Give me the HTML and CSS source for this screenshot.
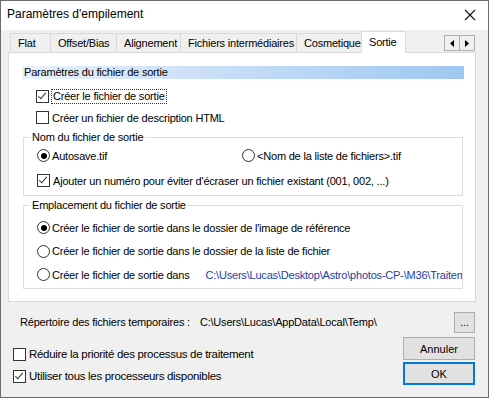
FILE: index.html
```html
<!DOCTYPE html>
<html lang="fr">
<head>
    <meta charset="UTF-8">
    <title>Paramètres d'empilement</title>
    <link rel="stylesheet" href="styles.css">
</head>
<body>
    <div class="window">
        <div class="titlebar">
            <span class="title">Paramètres d'empilement</span>
            <svg class="close" width="12" height="12" viewBox="0 0 12 12">
                <path d="M1 1 L11 11 M11 1 L1 11" stroke="#111" stroke-width="1.1" fill="none"/>
            </svg>
        </div>

        <div class="content">
            <div class="tabs">
                <div class="tab tab-flat">Flat</div>
                <div class="tab tab-offset">Offset/Bias</div>
                <div class="tab tab-align">Alignement</div>
                <div class="tab tab-files">Fichiers intermédiaires</div>
                <div class="tab tab-cosm">Cosmetique</div>
                <div class="tab active">Sortie</div>
                <div class="tab-scroll">
                    <span class="arrow"><svg width="4" height="7" viewBox="0 0 4 7"><path d="M4 0 L0 3.5 L4 7 Z" fill="#000"/></svg></span>
                    <span class="arrow"><svg width="4" height="7" viewBox="0 0 4 7"><path d="M0 0 L4 3.5 L0 7 Z" fill="#000"/></svg></span>
                </div>
            </div>

            <div class="panel">
                <div class="section-head">Paramètres du fichier de sortie</div>

                <div class="options">
                    <label class="row"><span class="check checked"></span><span class="focus">Créer le fichier de sortie</span></label>
                    <label class="row"><span class="check"></span>Créer un fichier de description HTML</label>
                </div>

                <fieldset class="group group-name">
                    <legend>Nom du fichier de sortie</legend>
                    <div class="row radios">
                        <label class="radio-item"><span class="radio selected"></span>Autosave.tif</label>
                        <label class="radio-item"><span class="radio"></span>&lt;Nom de la liste de fichiers&gt;.tif</label>
                    </div>
                    <label class="row numbering"><span class="check checked"></span>Ajouter un numéro pour éviter d'écraser un fichier existant (001, 002, ...)</label>
                </fieldset>

                <fieldset class="group group-place">
                    <legend>Emplacement du fichier de sortie</legend>
                    <label class="row"><span class="radio selected"></span>Créer le fichier de sortie dans le dossier de l'image de référence</label>
                    <label class="row"><span class="radio"></span>Créer le fichier de sortie dans le dossier de la liste de fichier</label>
                    <label class="row"><span class="radio"></span>Créer le fichier de sortie dans<span class="path">C:\Users\Lucas\Desktop\Astro\photos-CP-\M36\Traitement</span></label>
                </fieldset>
            </div>

            <div class="temp-row">
                <span class="temp-label">Répertoire des fichiers temporaires :</span>
                <span class="temp-path">C:\Users\Lucas\AppData\Local\Temp\</span>
                <button class="btn small">...</button>
            </div>

            <div class="footer">
                <div class="footer-options">
                    <label class="row"><span class="check"></span>Réduire la priorité des processus de traitement</label>
                    <label class="row"><span class="check checked"></span>Utiliser tous les processeurs disponibles</label>
                </div>
                <div class="footer-buttons">
                    <button class="btn">Annuler</button>
                    <button class="btn default">OK</button>
                </div>
            </div>
        </div>
    </div>
</body>
</html>
```

FILE: styles.css
```css
body {
    margin: 0;
    background-color: #f0f0f0;
    font-family: 'Liberation Sans', Arial, sans-serif;
    font-size: 11px;
    letter-spacing: -0.2px;
    color: #000;
}

.window {
    width: 487px;
    height: 396px;
    border: 1px solid #6b6b6b;
    background-color: #f0f0f0;
    overflow: hidden;
}

.titlebar {
    height: 29px;
    background-color: #fff;
    display: flex;
    align-items: center;
    justify-content: space-between;
    padding: 0 12px 0 6px;
}

.title {
    font-size: 12px;
    letter-spacing: 0;
    margin-top: -3px;
}

.close {
    margin-top: -2px;
}

.content {
    padding: 2px 12px 0 7px;
}

/* onglets */
.tabs {
    display: flex;
    align-items: flex-end;
    height: 20px;
    padding-left: 2px;
}

.tab {
    box-sizing: border-box;
    height: 19px;
    line-height: 18px;
    padding-left: 7px;
    border: 1px solid #d9d9d9;
    border-bottom: none;
    margin-right: -1px;
    background-color: #f0f0f0;
    white-space: nowrap;
}

.tab-flat { width: 41px; }
.tab-offset { width: 67px; }
.tab-align { width: 65px; }
.tab-files { width: 117px; }
.tab-cosm { width: 67px; }

.tab.active {
    width: 45px;
    height: 22px;
    line-height: 20px;
    background-color: #fff;
    margin-left: -1px;
    margin-bottom: -1px;
    position: relative;
    z-index: 1;
}

.tab-scroll {
    margin-left: auto;
    margin-right: 1px;
    align-self: center;
    display: flex;
    margin-top: 2px;
}

.arrow {
    width: 14px;
    height: 14px;
    border: 1px solid #adadad;
    background-color: #f0f0f0;
    display: flex;
    align-items: center;
    justify-content: center;
    margin-left: -1px;
}

.panel {
    box-sizing: border-box;
    height: 250px;
    border: 1px solid #d9d9d9;
    background-color: #fff;
    padding: 13px 11px 0 13px;
}

.section-head {
    height: 13px;
    line-height: 13px;
    padding-left: 2px;
    background: linear-gradient(to right, #e9f1fb, #9ec7f2);
}

.row {
    display: flex;
    align-items: center;
    height: 21px;
    white-space: nowrap;
}

.options {
    padding: 7px 0 0 14px;
}

.check {
    box-sizing: border-box;
    width: 13px;
    height: 13px;
    border: 1px solid #333;
    background-color: #fff;
    margin-right: 3px;
    flex: none;
    position: relative;
}

.check.checked::after {
    content: "";
    position: absolute;
    left: 3px;
    top: 0px;
    width: 3px;
    height: 7px;
    border: solid #333;
    border-width: 0 1px 1px 0;
    transform: rotate(40deg);
}

.focus {
    outline: 1px dotted #333;
    padding: 0 1px;
    line-height: 13px;
}

.radio {
    box-sizing: border-box;
    width: 13px;
    height: 13px;
    border: 1px solid #333;
    border-radius: 50%;
    margin-right: 2px;
    flex: none;
    position: relative;
}

.radio.selected::after {
    content: "";
    position: absolute;
    left: 2.5px;
    top: 2.5px;
    width: 6px;
    height: 6px;
    border-radius: 50%;
    background-color: #000;
}

.group {
    box-sizing: border-box;
    min-width: 0;
    width: 440px;
    margin: 3px 0 0 1px;
    border: 1px solid #dcdcdc;
    padding: 0 0 0 13px;
    overflow: hidden;
}

.group legend {
    padding: 0 2px;
    margin-left: -7px;
    line-height: 13px;
}

.group-name {
    padding-bottom: 4px;
}

.group-name .radios {
    margin-top: 1px;
}

.group-name .numbering {
    margin-top: 4px;
}

.radio-item {
    display: flex;
    align-items: center;
    width: 205px;
}

.group-place {
    padding-bottom: 1px;
}

.group-place .row {
    height: 23.5px;
}

.group-place .row:first-of-type {
    margin-top: 4px;
}

.path {
    color: #2040a8;
    margin-left: 16px;
}

/* bas de la boite */
.temp-row {
    display: flex;
    align-items: center;
    height: 30px;
    margin-top: 5px;
    padding-left: 12px;
}

.temp-label {
    margin-right: 10px;
}

.btn {
    font-family: 'Liberation Sans', Arial, sans-serif;
    font-size: 11px;
    background-color: #e1e1e1;
    border: 1px solid #adadad;
    color: #000;
    padding: 0;
    width: 72px;
    height: 23px;
}

.btn.small {
    width: 21px;
    height: 21px;
    margin-left: auto;
    margin-right: 1px;
}

.btn.default {
    border: 2px solid #0078d7;
}

.footer {
    display: flex;
    justify-content: space-between;
}

.footer-options {
    padding: 6px 0 0 5px;
    font-size: 11.5px;
    letter-spacing: -0.3px;
}

.footer-options .row {
    height: 22px;
}

.footer-buttons {
    display: flex;
    flex-direction: column;
    gap: 2px;
    margin-right: 1px;
}
```
